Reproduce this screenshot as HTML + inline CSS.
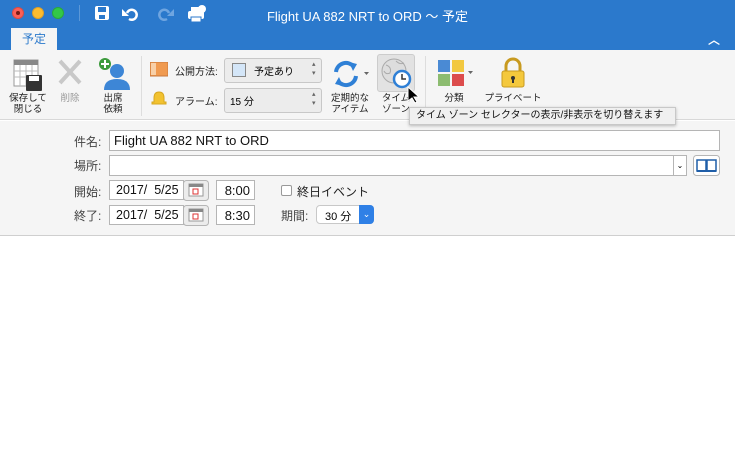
<!DOCTYPE html>
<html><head><meta charset="utf-8"><style>
*{box-sizing:border-box;margin:0;padding:0}
body{width:735px;height:450px;overflow:hidden;background:#fff;font-family:"Liberation Sans","Noto Sans CJK JP",sans-serif;position:relative}
.a{position:absolute;white-space:nowrap}
.t{font-size:9.5px;color:#222;text-align:center;line-height:11px}
.lbl{font-size:12px;color:#444}
.inp{background:#fff;border:1px solid #b5b5b5;font-size:13px;color:#111;overflow:hidden}
</style></head><body>
<div class="a" style="left:0;top:0;width:735px;height:50px;background:#2b79cc"></div>
<div class="a" style="left:12px;top:7px;width:12px;height:12px;border-radius:6px;background:#fc5f57;border:1px solid #d94b44"></div>
<div class="a" style="left:16px;top:11px;width:4px;height:4px;border-radius:2px;background:#7a1a14"></div>
<div class="a" style="left:32px;top:7px;width:12px;height:12px;border-radius:6px;background:#fdbc2e;border:1px solid #dca02a"></div>
<div class="a" style="left:52px;top:7px;width:12px;height:12px;border-radius:6px;background:#33c748;border:1px solid #2aa83b"></div>
<div class="a" style="left:79px;top:5px;width:1px;height:16px;background:#5b98d8"></div>
<svg class="a" style="left:94px;top:5px" width="120" height="18">
<rect x="1" y="1" width="14" height="14" rx="2" fill="#fff"/><rect x="4" y="2" width="8" height="5" fill="#2b79cc"/><rect x="5" y="10" width="6" height="4" fill="#2b79cc"/>
<path d="M33 8a5 5 0 1 1 2 6" stroke="#fff" stroke-width="2.5" fill="none"/><path d="M28 4v7h7z" fill="#fff"/>
<path d="M75 8a5 5 0 1 0 -2 6" stroke="#6fa5e0" stroke-width="2.5" fill="none"/><path d="M80 4v7h-7z" fill="#6fa5e0"/>
<rect x="94" y="6" width="16" height="8" rx="2" fill="#fff"/><rect x="97" y="2" width="10" height="5" fill="#fff"/><rect x="97" y="12" width="10" height="5" fill="#fff" stroke="#2b79cc"/><circle cx="108" cy="4" r="4" fill="#fff"/>
</svg>
<div class="a" style="left:0;top:6px;width:735px;text-align:center;color:#fff;font-size:13px">Flight UA 882 NRT to ORD 〜 予定</div>
<div class="a" style="left:11px;top:28px;width:46px;height:23px;background:#f5f5f5;color:#2b79cc;font-size:12px;text-align:center;line-height:22px">予定</div>
<div class="a" style="left:708px;top:31px;color:#fff;font-size:12px;font-weight:bold">︿</div>
<div class="a" style="left:0;top:50px;width:735px;height:70px;background:#f5f5f5;border-bottom:1px solid #d8d8d8"></div>
<svg class="a" style="left:12px;top:58px" width="120" height="36">
<rect x="2" y="2" width="24" height="26" fill="#fff" stroke="#999"/><rect x="2" y="2" width="24" height="5" fill="#888"/>
<path d="M2 13h24M2 19h24M8 7v21M14 7v21M20 7v21" stroke="#bbb"/>
<rect x="14" y="17" width="16" height="16" rx="1" fill="#333"/><rect x="17" y="18" width="10" height="5" fill="#fff"/>
<path d="M48 3l20 22M68 3l-20 22" stroke="#c8c8c8" stroke-width="4"/>
<circle cx="105" cy="13" r="7" fill="#3d86d6"/><path d="M92 32q0-11 13-11q13 0 13 11z" fill="#3d86d6"/>
<circle cx="93" cy="6" r="6" fill="#3c9a3c"/><path d="M93 2v8M89 6h8" stroke="#fff" stroke-width="2"/>
</svg>
<div class="a t" style="left:5px;top:93px;width:46px">保存して<br>閉じる</div>
<div class="a t" style="left:55px;top:93px;width:30px;color:#999">削除</div>
<div class="a t" style="left:98px;top:93px;width:30px">出席<br>依頼</div>
<div class="a" style="left:141px;top:56px;width:1px;height:60px;background:#ddd"></div>
<svg class="a" style="left:150px;top:62px" width="18" height="46"><rect x="0" y="0" width="18" height="14" fill="#f09a50" stroke="#c8783c"/><rect x="1" y="1" width="5" height="12" fill="#f8d0a8"/>
<path d="M9 30q-5 0-5 6v4h-2v2h14v-2h-2v-4q0-6-5-6z" fill="#f2c230" stroke="#d8a820"/></svg>
<div class="a lbl" style="left:175px;top:63px;font-size:10px;color:#222">公開方法:</div>
<div class="a lbl" style="left:175px;top:93px;font-size:10px;color:#222">アラーム:</div>
<div class="a" style="left:224px;top:58px;width:98px;height:25px;background:#ececec;border:1px solid #c8c8c8;border-radius:3px"></div>
<div class="a" style="left:232px;top:63px;width:14px;height:14px;background:#d4e6f8;border:1px solid #888"></div>
<div class="a" style="left:254px;top:63px;font-size:10px">予定あり</div>
<div class="a" style="left:312px;top:60px;font-size:7px;color:#666;line-height:9px">▴<br>▾</div>
<div class="a" style="left:224px;top:88px;width:98px;height:25px;background:#ececec;border:1px solid #c8c8c8;border-radius:3px"></div>
<div class="a" style="left:230px;top:93px;font-size:10px">15 分</div>
<div class="a" style="left:312px;top:90px;font-size:7px;color:#666;line-height:9px">▴<br>▾</div>
<svg class="a" style="left:331px;top:60px" width="40" height="30"><path d="M5 12a10 10 0 0 1 18-5" stroke="#2f80d6" stroke-width="4" fill="none"/><path d="M18 2l8 2-4 7z" fill="#2f80d6"/><path d="M25 16a10 10 0 0 1 -18 5" stroke="#2f80d6" stroke-width="4" fill="none"/><path d="M12 26l-8-2 4-7z" fill="#2f80d6"/><path d="M33 12h5l-2.5 3z" fill="#666"/></svg>
<div class="a t" style="left:328px;top:93px;width:44px">定期的な<br>アイテム</div>
<div class="a" style="left:377px;top:54px;width:38px;height:38px;background:#e2e2e2;border:1px solid #ccc;border-radius:3px"></div>
<svg class="a" style="left:380px;top:57px" width="34" height="34"><circle cx="14" cy="14" r="12" fill="#ddd" stroke="#aaa"/><path d="M6 8q6 2 4 8q-4 2-6-2M16 4q4 4 8 2M14 20q6-2 8 4" stroke="#aaa" fill="none"/><circle cx="22" cy="22" r="8" fill="#fff" stroke="#2f80d6" stroke-width="2.5"/><path d="M22 17v5h4" stroke="#333" stroke-width="1.5" fill="none"/></svg>
<div class="a t" style="left:378px;top:93px;width:36px">タイム<br>ゾーン</div>
<svg class="a" style="left:407px;top:86px" width="12" height="18"><path d="M1 1v14l4-3 3 5 2-1-3-5h5z" fill="#000" stroke="#fff"/></svg>
<div class="a" style="left:425px;top:56px;width:1px;height:60px;background:#ddd"></div>
<svg class="a" style="left:437px;top:59px" width="40" height="30"><rect x="1" y="1" width="12" height="12" fill="#4a8ad4"/><rect x="15" y="1" width="12" height="12" fill="#f2c840"/><rect x="1" y="15" width="12" height="12" fill="#8cbc70"/><rect x="15" y="15" width="12" height="12" fill="#dc4c4c"/><path d="M31 12h5l-2.5 3z" fill="#666"/></svg>
<div class="a t" style="left:440px;top:93px;width:28px">分類</div>
<svg class="a" style="left:500px;top:57px" width="26" height="32"><path d="M6 14v-5a7 7 0 0 1 14 0v5" stroke="#c89a20" stroke-width="3" fill="none"/><rect x="2" y="14" width="22" height="16" rx="2" fill="#f4c83c" stroke="#c89a20"/><circle cx="13" cy="21" r="2" fill="#333"/><rect x="12" y="21" width="2" height="5" fill="#333"/></svg>
<div class="a t" style="left:482px;top:93px;width:62px">プライベート</div>
<div class="a" style="left:0;top:121px;width:735px;height:115px;background:#f5f5f5;border-bottom:1px solid #cfcfcf"></div>
<div class="a" style="left:409px;top:107px;width:267px;height:18px;background:#f0f0f0;border:1px solid #c8c8c8;box-shadow:0 1px 3px rgba(0,0,0,.25);font-size:10px;line-height:16px;padding-left:6px;color:#111">タイム ゾーン セレクターの表示/非表示を切り替えます</div>
<div class="a lbl" style="left:74px;top:133px">件名:</div>
<div class="a inp" style="left:109px;top:130px;width:611px;height:21px;padding:2px 4px">Flight UA 882 NRT to ORD</div>
<div class="a lbl" style="left:74px;top:157px">場所:</div>
<div class="a inp" style="left:109px;top:155px;width:578px;height:21px"></div>
<div class="a" style="left:673px;top:155px;width:14px;height:21px;border:1px solid #b5b5b5;background:#fff;font-size:8px;text-align:center;line-height:20px">⌄</div>
<svg class="a" style="left:693px;top:155px" width="27" height="21"><rect x=".5" y=".5" width="26" height="20" rx="3" fill="#fff" stroke="#b5b5b5"/><path d="M4 5h9v11h-9zM14 5h9v11h-9z" fill="#fff" stroke="#1f5ea8" stroke-width="1.5"/><path d="M4 16h19" stroke="#1f5ea8" stroke-width="2"/></svg>
<div class="a lbl" style="left:74px;top:183px">開始:</div>
<div class="a lbl" style="left:74px;top:207px">終了:</div>
<div class="a inp" style="left:109px;top:180px;width:75px;height:20px;padding:2px 0 0 6px;font-size:12.5px">2017/&nbsp; 5/25</div>
<div class="a inp" style="left:109px;top:205px;width:75px;height:20px;padding:2px 0 0 6px;font-size:12.5px">2017/&nbsp; 5/25</div>
<svg class="a" style="left:183px;top:180px" width="26" height="46"><g><rect x=".5" y=".5" width="25" height="20" rx="3" fill="#ececec" stroke="#b5b5b5"/><rect x="6" y="4" width="14" height="12" fill="#fff" stroke="#999"/><rect x="6" y="4" width="14" height="3" fill="#888"/><rect x="10" y="9" width="5" height="5" fill="none" stroke="#d33"/></g><g transform="translate(0,25)"><rect x=".5" y=".5" width="25" height="20" rx="3" fill="#ececec" stroke="#b5b5b5"/><rect x="6" y="4" width="14" height="12" fill="#fff" stroke="#999"/><rect x="6" y="4" width="14" height="3" fill="#888"/><rect x="10" y="9" width="5" height="5" fill="none" stroke="#d33"/></g></svg>
<div class="a inp" style="left:216px;top:180px;width:39px;height:20px;padding:2px 4px;text-align:right">8:00</div>
<div class="a inp" style="left:216px;top:205px;width:39px;height:20px;padding:2px 4px;text-align:right">8:30</div>
<div class="a" style="left:281px;top:185px;width:11px;height:11px;border:1px solid #999;border-radius:2px;background:#fff"></div>
<div class="a lbl" style="left:297px;top:183px;color:#222">終日イベント</div>
<div class="a lbl" style="left:281px;top:207px">期間:</div>
<div class="a" style="left:316px;top:205px;width:58px;height:19px;background:#fff;border:1px solid #c8c8c8;border-radius:4px;font-size:11px;padding:2px 0 0 8px">30 分</div>
<div class="a" style="left:359px;top:205px;width:15px;height:19px;background:#2f80e6;border-radius:0 4px 4px 0;color:#fff;font-size:9px;text-align:center;line-height:18px">⌄</div>
</body></html>
